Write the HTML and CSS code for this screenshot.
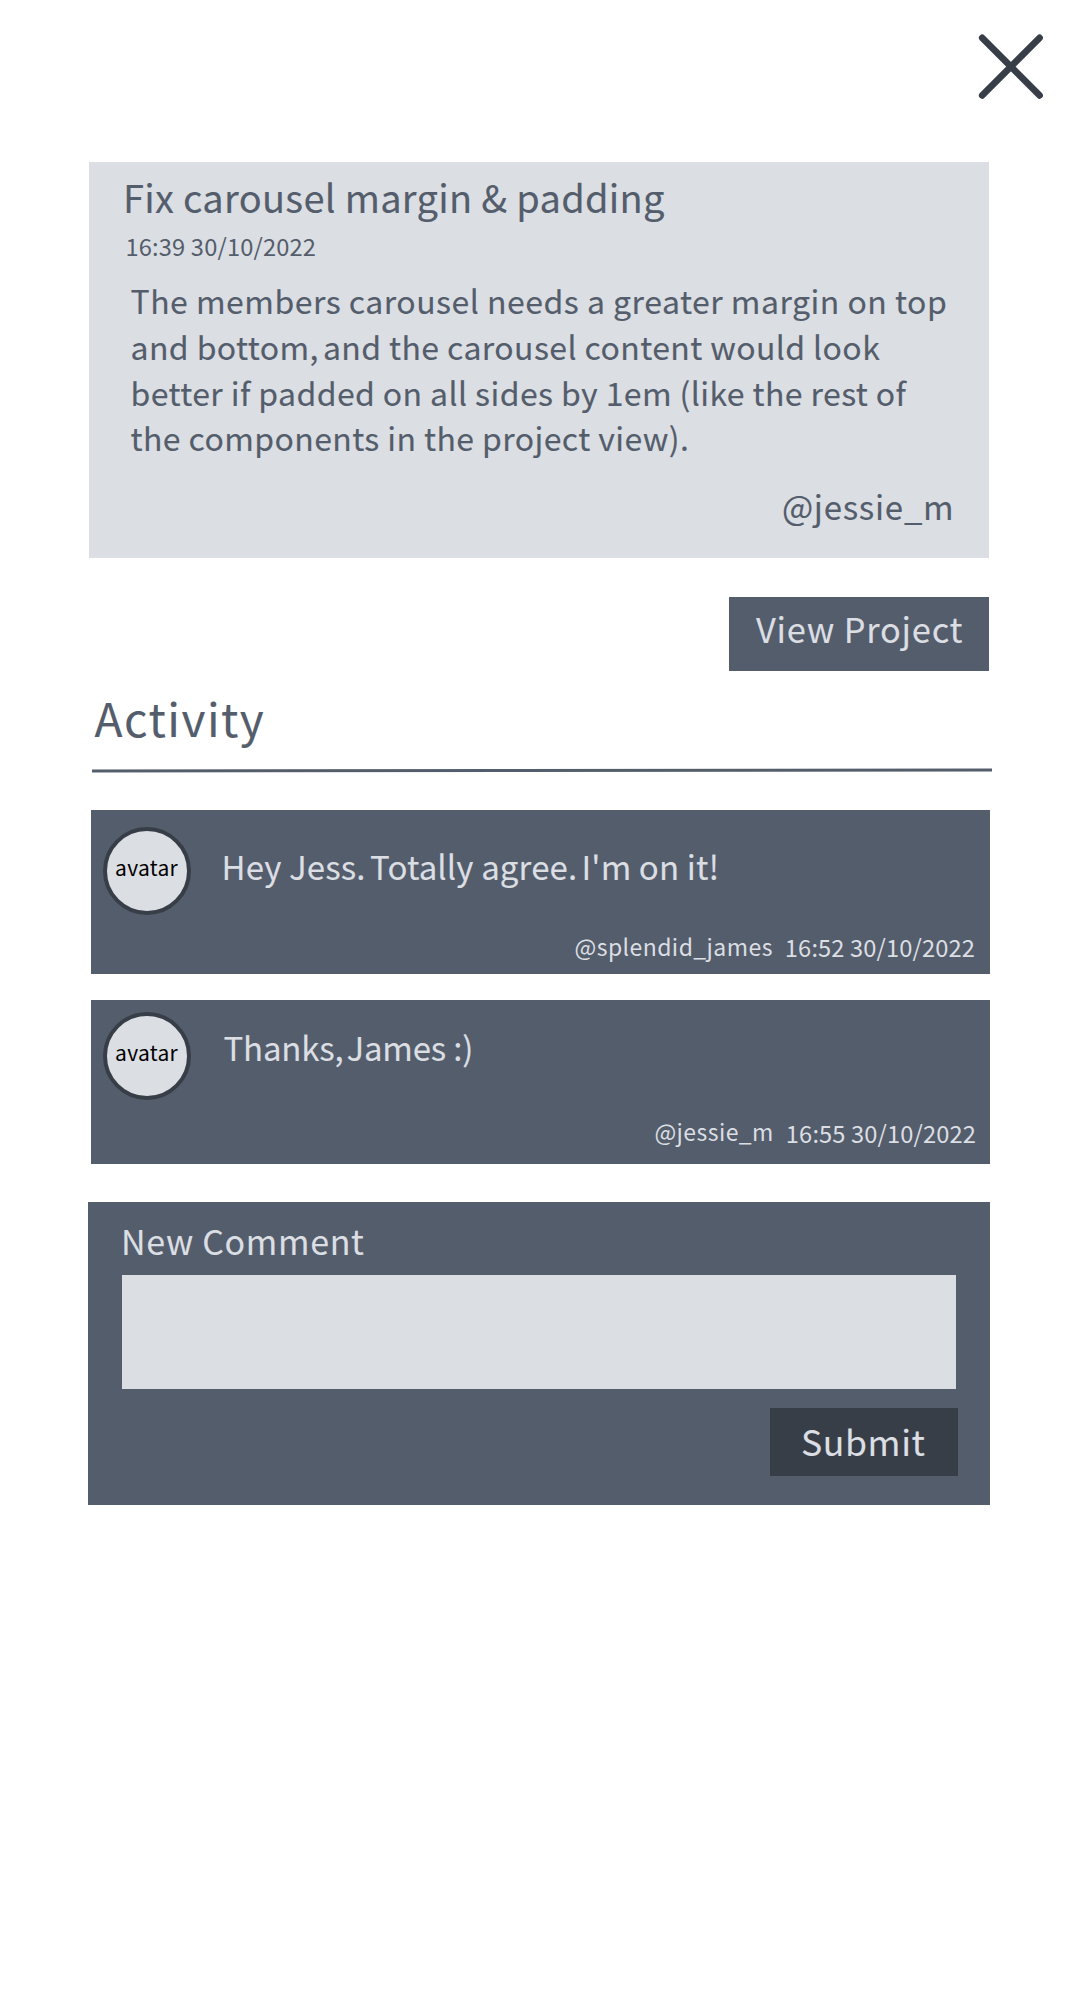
FILE: index.html
```
<!DOCTYPE html>
<html lang="en">
<head>
  <meta charset="utf-8">
  <title>Fix carousel margin &amp; padding</title>
  <link rel="stylesheet" href="styles.css">
</head>
<body>
  <header class="topbar">
    <button class="close" aria-label="Close">
      <svg width="66" height="66" viewBox="0 0 66 66"><path d="M4.2 3.8 61.6 61.4M61.6 3.8 4.2 61.4"/></svg>
    </button>
  </header>
  <main>
    <article class="ticket">
      <h1 class="ticket-title">Fix carousel margin &amp; padding</h1>
      <time class="ticket-date">16:39 30/10/2022</time>
      <p class="ticket-body">
        <span class="line wide">The members carousel needs a greater margin on top</span>
        <span class="line">and bottom,<span class="snug"> </span>and the carousel content would look</span>
        <span class="line">better if padded on all sides by 1em (like the rest of</span>
        <span class="line">the components in the project view).</span>
      </p>
      <span class="ticket-author">@jessie_m</span>
    </article>

    <button class="view-project">View Project</button>

    <section class="activity">
      <h2 class="activity-title">Activity</h2>
      <svg class="rule" width="900" height="10" viewBox="0 0 900 10"><path d="M0 4.9 900 4"/></svg>

      <div class="comment first">
        <div class="comment-main">
          <span class="avatar">avatar</span>
          <p class="message">Hey Jess.<span class="snug"> </span>Totally agree.<span class="snug"> </span>I'm on it!</p>
        </div>
        <div class="meta">
          <span class="handle">@splendid_james</span>
          <time class="stamp">16:52 30/10/2022</time>
        </div>
      </div>

      <div class="comment second">
        <div class="comment-main">
          <span class="avatar">avatar</span>
          <p class="message">Thanks,<span class="snug"> </span>James :)</p>
        </div>
        <div class="meta">
          <span class="handle">@jessie_m</span>
          <time class="stamp">16:55 30/10/2022</time>
        </div>
      </div>
    </section>

    <form class="new-comment">
      <label class="field-label" for="comment">New Comment</label>
      <textarea class="field" id="comment"></textarea>
      <button class="submit" type="button">Submit</button>
    </form>
  </main>
</body>
</html>
```
FILE: styles.css
```
:root {
  --light: #dbdee3;
  --slate: #545d6b;
  --dark: #383e48;
}

* {
  box-sizing: border-box;
  margin: 0;
  padding: 0;
}

body {
  width: 1080px;
  min-height: 2000px;
  background: #fff;
  color: var(--slate);
  font-family: "Noto Sans CJK SC", "Noto Sans", sans-serif;
  font-weight: 400;
}

h1,
h2 {
  font-weight: 400;
}

button {
  border: 0;
  border-radius: 0;
  font-family: inherit;
  font-weight: 400;
}

.topbar {
  display: flex;
  justify-content: flex-end;
  height: 162px;
  padding: 34px 36px 0 0;
}

.close {
  width: 66px;
  height: 66px;
  background: none;
}

.close svg {
  display: block;
  fill: none;
  stroke: var(--dark);
  stroke-width: 6.6;
  stroke-linecap: round;
}

main {
  display: flex;
  flex-direction: column;
}

.ticket-title,
.ticket-body,
.ticket-author,
.view-project,
.activity-title,
.message,
.field-label,
.submit {
  -webkit-text-stroke: 0.12px currentColor;
}

/* Ticket */
.ticket {
  display: flex;
  flex-direction: column;
  width: 900px;
  height: 396px;
  margin-left: 89.4px;
  padding: 7px 35px 0 33.6px;
  background: var(--light);
}

.ticket-title {
  font-size: 38px;
  line-height: 55px;
  letter-spacing: 0.3px;
}

.ticket-date {
  margin: 5px 0 0 2.5px;
  font-size: 23.7px;
  line-height: 34px;
  letter-spacing: 0.15px;
}

.ticket-body {
  margin: 15px 0 0 7.5px;
  font-size: 32px;
  line-height: 45.8px;
  letter-spacing: 0.4px;
  white-space: nowrap;
}

.line {
  display: block;
}

.line.wide {
  letter-spacing: 0.49px;
}

.line .snug {
  word-spacing: -3.5px;
}

.ticket-author {
  align-self: flex-end;
  margin-top: 20.8px;
  font-size: 33px;
  line-height: 48px;
  letter-spacing: 0.74px;
}

.view-project {
  width: 260px;
  height: 74px;
  margin: 39px 0 0 729px;
  padding: 7px 0 18px 27px;
  background: var(--slate);
  color: var(--light);
  font-size: 34.4px;
  line-height: 49px;
  letter-spacing: 0.78px;
  text-align: left;
}

/* Activity */
.activity {
  margin: 14px 0 0 91px;
}

.activity-title {
  padding-left: 3.5px;
  font-size: 46px;
  line-height: 65px;
  letter-spacing: 1.5px;
}

.rule {
  display: block;
  margin: 16px 0 34px 1px;
  fill: none;
  stroke: var(--slate);
  stroke-width: 3;
}

.comment {
  display: flex;
  flex-direction: column;
  justify-content: space-between;
  width: 899px;
  height: 164px;
  background: var(--slate);
  color: var(--light);
}

.comment.first {
  padding: 17px 15px 10px 11.5px;
}

.comment.second {
  margin-top: 26px;
  padding: 12px 14px 15px 11.5px;
}

.comment-main {
  display: flex;
  align-items: flex-start;
  height: 88px;
}

.avatar {
  display: flex;
  align-items: center;
  justify-content: center;
  width: 88px;
  height: 88px;
  padding-bottom: 8px;
  border: 4px solid var(--dark);
  border-radius: 50%;
  background: var(--light);
  color: #000;
  font-size: 21px;
  line-height: 30px;
  letter-spacing: 0.28px;
}

.message {
  font-size: 33px;
  line-height: 48px;
}

.first .message {
  margin: 15px 0 0 31px;
  letter-spacing: 0.12px;
}

.first .snug {
  word-spacing: -3.2px;
}

.second .message {
  margin: 11px 0 0 33px;
  letter-spacing: -0.2px;
}

.second .snug {
  word-spacing: -4.2px;
}

.meta {
  display: flex;
  justify-content: flex-end;
  gap: 12px;
  height: 35px;
  line-height: 34px;
}

.handle {
  font-size: 23px;
  letter-spacing: 0.43px;
}

.stamp {
  padding-top: 1px;
  font-size: 23.7px;
  letter-spacing: 0.12px;
}

.second .stamp {
  padding-top: 2px;
}

/* New comment */
.new-comment {
  display: flex;
  flex-direction: column;
  width: 902px;
  height: 303px;
  margin: 38px 0 0 88px;
  padding: 14px 32px 0 33px;
  background: var(--slate);
  color: var(--light);
}

.field-label {
  font-size: 34px;
  line-height: 49px;
  letter-spacing: 0.68px;
}

.field {
  width: 834px;
  height: 114px;
  margin: 10px 0 0 1px;
  border: 0;
  background: var(--light);
  resize: none;
}

.submit {
  align-self: flex-end;
  width: 188px;
  height: 68px;
  margin-top: 19px;
  padding: 7px 0 10px 31px;
  background: var(--dark);
  color: var(--light);
  font-size: 35.6px;
  line-height: 51px;
  letter-spacing: 0.6px;
  text-align: left;
}
```
